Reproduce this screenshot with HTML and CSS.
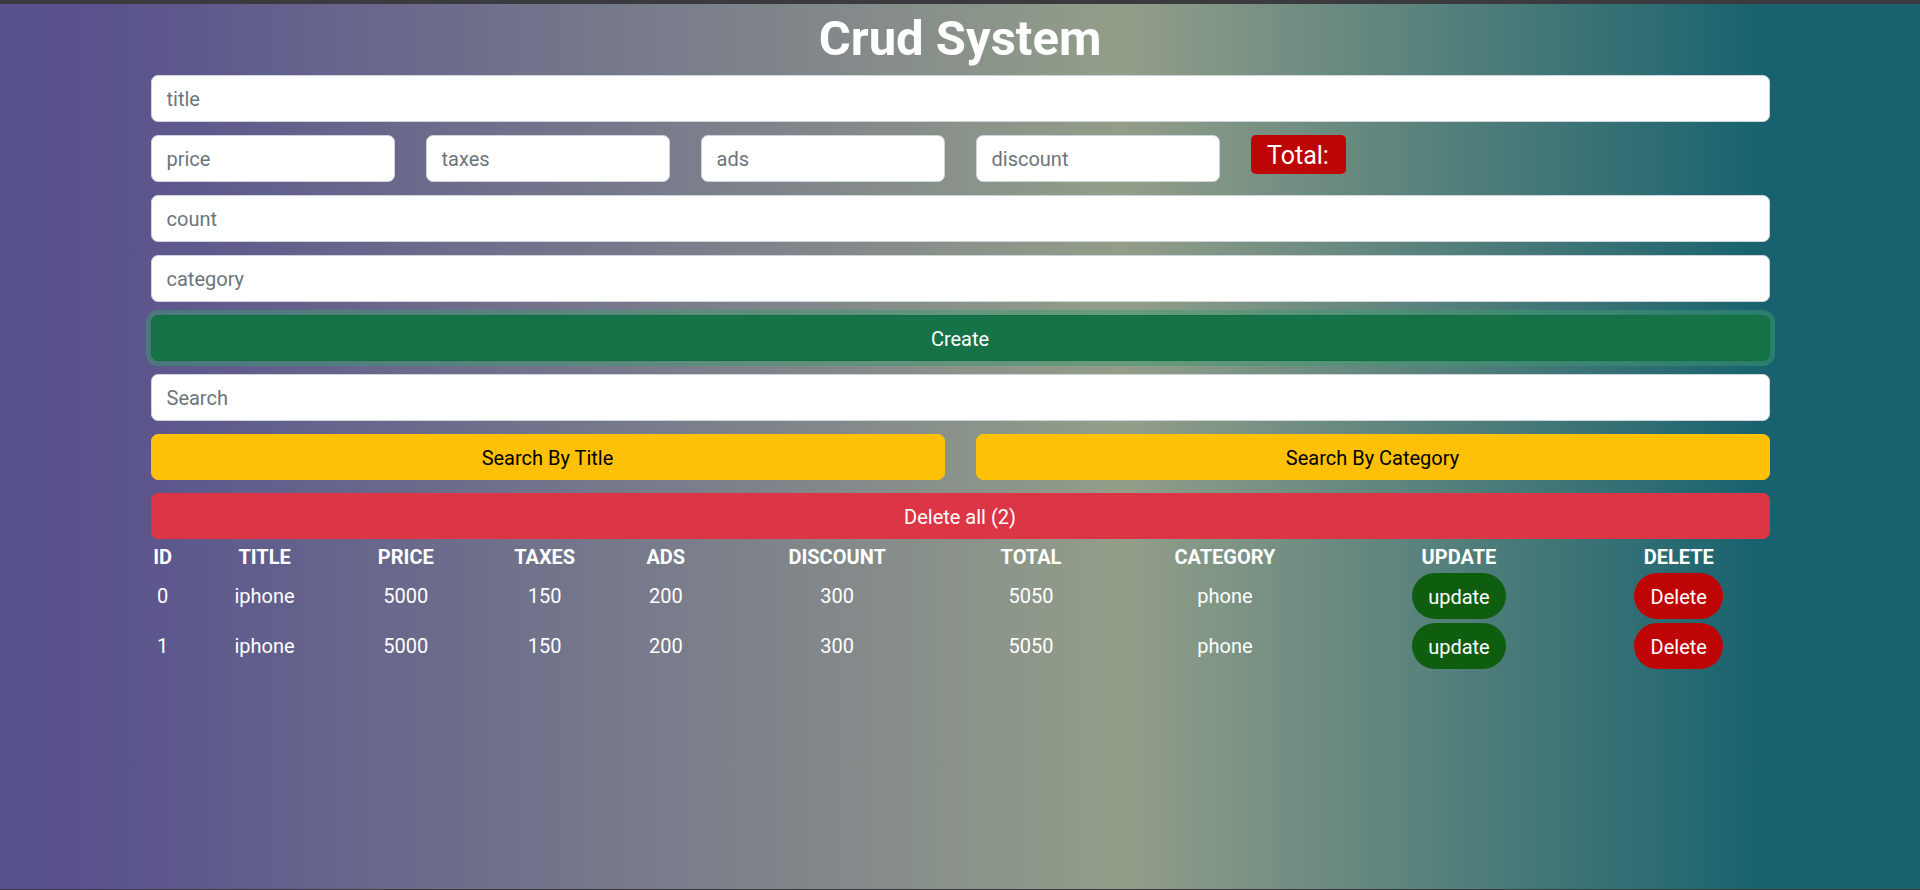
FILE: index.html
```html
<!DOCTYPE html>
<html lang="en">
<head>
<meta charset="utf-8">
<title>Crud System</title>
<link rel="stylesheet" href="styles.css">
</head>
<body>
<main class="crud">
  <h1 class="heading">Crud System</h1>
  <div class="form">
    <input class="field" type="text" placeholder="title">
    <div class="price-row">
      <input class="field field-small" type="number" placeholder="price">
      <input class="field field-small" type="number" placeholder="taxes">
      <input class="field field-small" type="number" placeholder="ads">
      <input class="field field-small" type="number" placeholder="discount">
      <span class="total">Total:</span>
    </div>
    <input class="field" type="number" placeholder="count">
    <input class="field" type="text" placeholder="category">
    <button class="btn btn-create">Create</button>
    <input class="field" type="text" placeholder="Search">
    <div class="search-row">
      <button class="btn btn-search">Search By Title</button>
      <button class="btn btn-search">Search By Category</button>
    </div>
    <button class="btn btn-delete-all">Delete all (2)</button>
  </div>
  <table class="products">
    <colgroup>
      <col class="c-id"><col class="c-title"><col class="c-price"><col class="c-taxes"><col class="c-ads">
      <col class="c-discount"><col class="c-total"><col class="c-category"><col class="c-update"><col class="c-delete">
    </colgroup>
    <thead>
      <tr>
        <th>ID</th><th>TITLE</th><th>PRICE</th><th>TAXES</th><th>ADS</th>
        <th>DISCOUNT</th><th>TOTAL</th><th>CATEGORY</th><th>UPDATE</th><th>DELETE</th>
      </tr>
    </thead>
    <tbody>
      <tr>
        <td>0</td><td>iphone</td><td>5000</td><td>150</td><td>200</td>
        <td>300</td><td>5050</td><td>phone</td>
        <td><button class="pill pill-update">update</button></td>
        <td><button class="pill pill-delete">Delete</button></td>
      </tr>
      <tr>
        <td>1</td><td>iphone</td><td>5000</td><td>150</td><td>200</td>
        <td>300</td><td>5050</td><td>phone</td>
        <td><button class="pill pill-update">update</button></td>
        <td><button class="pill pill-delete">Delete</button></td>
      </tr>
    </tbody>
  </table>
</main>
</body>
</html>
```

FILE: styles.css
```css
* {
  box-sizing: border-box;
}

html, body {
  margin: 0;
  padding: 0;
}

body {
  height: 890px;
  overflow: hidden;
  border-top: 4px solid #3a3a3f;
  border-bottom: 1px solid #3a3a3f;
  background: linear-gradient(90deg, #56508e 0%, #57508d 3.5%, #939e89 58.5%, #17626e 92%, #17626e 100%);
  font-family: Roboto, "Liberation Sans", sans-serif;
  color: #fff;
}

.crud {
  width: 1619px;
  margin: 0 auto;
}

.heading {
  margin: 4px 0 0;
  height: 60px;
  line-height: 62px;
  font-size: 49px;
  font-weight: 700;
  text-align: center;
  color: #fff;
}

.form {
  margin-top: 7px;
  display: flex;
  flex-direction: column;
  gap: 13px;
}

.field {
  display: block;
  width: 100%;
  height: 47px;
  padding: 1px 15px 0;
  border: 1.25px solid #ced4da;
  border-radius: 7px;
  background: #fff;
  font-family: inherit;
  font-size: 20px;
  color: #212529;
  outline: none;
  -moz-appearance: textfield;
}

.field::placeholder {
  color: #6c757d;
}

.field::-webkit-outer-spin-button,
.field::-webkit-inner-spin-button {
  -webkit-appearance: none;
  margin: 0;
}

.price-row {
  display: flex;
  align-items: flex-start;
  gap: 31px;
}

.field-small {
  width: 244px;
  flex: none;
}

.total {
  display: flex;
  align-items: center;
  justify-content: center;
  height: 39px;
  width: 95px;
  padding-top: 2px;
  border-radius: 5px;
  background: #bd0505;
  color: #fff;
  font-size: 25px;
}

.btn {
  display: block;
  width: 100%;
  height: 46px;
  padding-top: 2px;
  border: 1.25px solid transparent;
  border-radius: 7px;
  font-family: inherit;
  font-size: 20px;
  cursor: pointer;
}

.btn-create {
  background: #157347;
  border-color: #146c43;
  color: #fff;
  box-shadow: 0 0 0 5px rgba(60, 153, 110, 0.5);
}

.search-row {
  display: flex;
  gap: 31px;
}

.btn-search {
  flex: 1;
  background: #ffc107;
  border-color: #ffc107;
  color: #000;
}

.btn-delete-all {
  background: #dc3545;
  border-color: #dc3545;
  color: #fff;
}

.products {
  width: 1652px;
  margin: 0 -16.5px;
  border-collapse: collapse;
  table-layout: fixed;
  font-size: 20px;
  color: #fff;
}

.c-id { width: 57.4px; }
.c-title { width: 146.4px; }
.c-price { width: 136px; }
.c-taxes { width: 141.8px; }
.c-ads { width: 100.4px; }
.c-discount { width: 242.4px; }
.c-total { width: 145.2px; }
.c-category { width: 242.8px; }
.c-update { width: 225.2px; }
.c-delete { width: 214.4px; }

.products th {
  height: 34px;
  padding: 2px 0 0;
  font-weight: 700;
  text-align: center;
  vertical-align: middle;
}

.products td {
  height: 50px;
  padding: 0 0 4px;
  text-align: center;
  vertical-align: middle;
}

.pill {
  height: 46px;
  padding-top: 2px;
  border: none;
  border-radius: 23px;
  font-family: inherit;
  font-size: 20px;
  color: #fff;
  cursor: pointer;
  vertical-align: middle;
}

.pill-update {
  width: 94px;
  background: #0f5e0f;
}

.pill-delete {
  width: 89px;
  background: #be0505;
}
```
